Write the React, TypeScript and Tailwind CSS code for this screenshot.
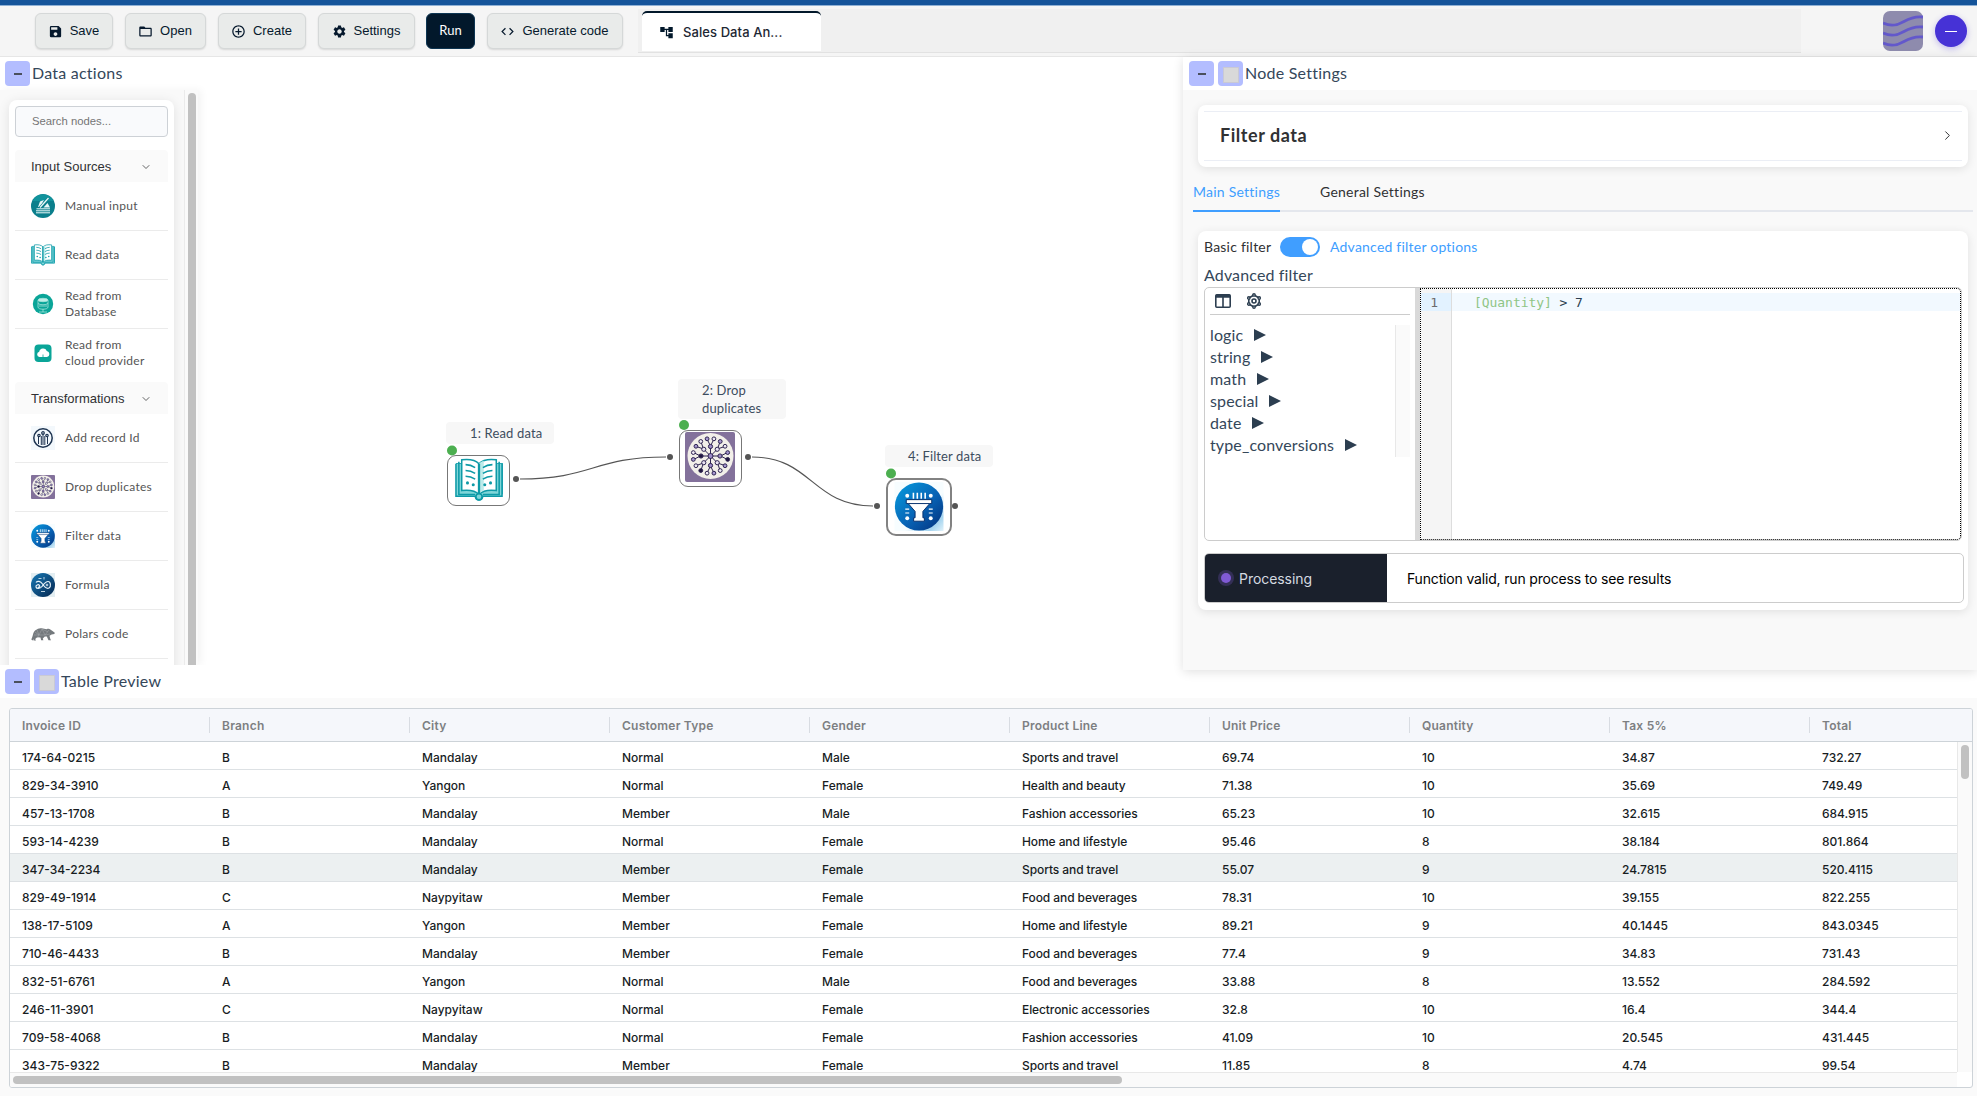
import React from "react";
import { MdSave, MdFolderOpen, MdAddCircleOutline, MdSettings, MdCode, MdAccountTree } from "react-icons/md";
import { ChevronDown, ChevronRight } from "lucide-react";

type IconProps = { className?: string };

const BookIcon = ({ className }: IconProps) => (
  <svg viewBox="0 0 50 50" className={className} fill="none" stroke="#0e9aa7" strokeWidth="1.6">
    <path d="M1 8h7v31c6 0 12 0 15 2h4c3-2 9-2 15-2h7V8h-7v29H8" fill="#4cc3c9" />
    <path d="M1 8v34h20c1 5 7 5 8 0h20V8" fill="#7fd6d9" />
    <path d="M4 6v34h17M46 6v34H29" />
    <path d="M7 4c8-1 14 0 18 4v32c-4-4-10-5-18-4z" fill="#fff" />
    <path d="M43 4c-8-1-14 0-18 4v32c4-4 10-5 18-4z" fill="#fff" />
    <path d="M25 8c2-2 3-2 5-3v31c-2 1-4 2-5 4z" fill="#bdebea" stroke="none" />
    <path d="M11 9c4 0 7 1 10 3M11 15c4 0 7 1 10 3M11 21c4 0 7 1 10 3M39 9c-4 0-7 1-10 3M39 15c-4 0-7 1-10 3M39 21c-4 0-7 1-10 3" />
    <path d="M25 8v33" strokeWidth="2.4" />
    <circle cx="13" cy="28" r="1.6" fill="#0e9aa7" stroke="none" />
    <circle cx="19" cy="30" r="1.6" fill="#0e9aa7" stroke="none" />
    <circle cx="31" cy="30" r="1.6" fill="#0e9aa7" stroke="none" />
    <circle cx="37" cy="28" r="1.6" fill="#0e9aa7" stroke="none" />
    <circle cx="25" cy="42.5" r="3.2" fill="#7fd6d9" />
  </svg>
);

const at = (deg: number, r: number) => [25.5 + r * Math.cos((deg * Math.PI) / 180), 24 + r * Math.sin((deg * Math.PI) / 180)];
const inner = [0, 45, 90, 135, 180, 225, 270, 315];
const outer = Array.from({ length: 16 }, (_, i) => i * 22.5 + 11.25);

const NetworkIcon = ({ className }: IconProps) => (
  <svg viewBox="0 0 50 50" className={className}>
    <rect width="50" height="50" rx="2" fill="#83719b" />
    <circle cx="25.5" cy="24" r="23" fill="#f2efe9" />
    <g stroke="#2d2350" strokeWidth="1">
      {inner.map((a) => {
        const [x, y] = at(a, 10);
        const [p, q] = at(a - 11.25, 17);
        const [s, t] = at(a + 11.25, 17);
        return <path key={a} d={`M25.500 24L${x} ${y}M${p} ${q}L${x} ${y}L${s} ${t}`} fill="none" />;
      })}
      {inner.map((a) => {
        const [x, y] = at(a, 9.5);
        return <circle key={a} cx={x} cy={y} r="2.1" fill={a === 180 ? "#1f1440" : a % 90 ? "#e8e2f2" : "#9c8ac6"} />;
      })}
      {outer.map((a, i) => {
        const [x, y] = at(a, 17.5);
        return <circle key={a} cx={x} cy={y} r="1.9" fill={i === 0 || i === 5 ? "#1f1440" : i % 2 ? "#a596cf" : "#efeaf5"} />;
      })}
      <circle cx="25.5" cy="24" r="2.5" fill="#9c8ac6" />
    </g>
  </svg>
);

const FunnelIcon = ({ className }: IconProps) => (
  <svg viewBox="0 0 50 50" className={className}>
    <defs>
      <linearGradient id="funnelSky" x1="0" y1="0" x2="1" y2="1">
        <stop offset="0" stopColor="#069ddf" />
        <stop offset="0.55" stopColor="#0863b5" />
        <stop offset="1" stopColor="#042f7a" />
      </linearGradient>
      <linearGradient id="funnelCorner" x1="0" y1="0" x2="1" y2="1">
        <stop offset="0.6" stopColor="#f7fdff" />
        <stop offset="0.85" stopColor="#a5d4ef" />
        <stop offset="1" stopColor="#e2f3fb" />
      </linearGradient>
    </defs>
    <rect width="50" height="50" fill="url(#funnelCorner)" />
    <circle cx="25" cy="25" r="24.6" fill="url(#funnelSky)" />
    <g fill="#fff">
      <circle cx="13" cy="14" r="2" />
      <circle cx="37" cy="14" r="2" />
      <circle cx="13" cy="37" r="2" />
      <circle cx="37" cy="37" r="2" />
      <path d="M18.500 11h1.600v6h-1.600zM22.500 11h1.600v6h-1.600zM26.500 11h1.600v6h-1.600zM30.500 11h1.600v6h-1.600z" />
      <path d="M11 27h4v1.200h-4zM11 31h4v1.200h-4zM35 27h4v1.200h-4zM35 31h4v1.200h-4z" />
      <path d="M12 18h26v4H36L29 30v6.500h1.500v3.500h-11v-3.500H21V30l-7-8h-2z" stroke="#06306e" strokeWidth="1" />
    </g>
    <path d="M14 22h22" stroke="#06306e" strokeWidth="1" />
  </svg>
);

const ManualIcon = ({ className }: IconProps) => (
  <svg viewBox="0 0 24 24" className={className}>
    <circle cx="12" cy="12" r="12" fill="#0b7f8c" />
    <path d="M1.500 7a11.500 11.500 0 0 1 21 0z" fill="#16a0a6" opacity="0.6" />
    <path d="M7 13l2-5.500 4-1.500-3.500 6.500z" fill="#e8f8f8" />
    <path d="M12.500 13.500l4-4.500 2.500 4.500z" fill="#e8f8f8" />
    <path d="M9 13.500l8.500-9.500" stroke="#0b7f8c" strokeWidth="2.600" />
    <path d="M9 13.500l8.500-9.500" stroke="#e8f8f8" strokeWidth="1.300" />
    <path d="M5.500 14.800h13.500M5 16.800h14M5 18.800h14" fill="none" stroke="#e8f8f8" strokeWidth="1" />
  </svg>
);

const DatabaseIcon = ({ className }: IconProps) => (
  <svg viewBox="0 0 24 24" className={className}>
    <circle cx="12" cy="12" r="10.200" fill="#0aa598" />
    <g fill="none" stroke="#a5e3db" strokeWidth="0.800">
      <ellipse cx="12" cy="8" rx="5" ry="1.700" fill="#bdeee7" />
      <path d="M7 8v7c0 1.400 2 2.200 5 2.200s5-.8 5-2.200V8M7 11.500c2 1.700 8 1.700 10 0M8 14h8M12 17v3M8 20h8" />
    </g>
  </svg>
);

const CloudIcon = ({ className }: IconProps) => (
  <svg viewBox="0 0 24 24" className={className}>
    <rect x="3.500" y="3.500" width="17" height="17.500" rx="4" fill="#0aa598" />
    <path d="M8.500 16a2.700 2.700 0 0 1-.3-5.300 4 4 0 0 1 7.600-.6A3 3 0 0 1 16 16z" fill="#fff" />
    <path d="M12 17v-3.500" stroke="#0aa598" strokeWidth="0.800" fill="none" />
  </svg>
);

const RecordIcon = ({ className }: IconProps) => (
  <svg viewBox="0 0 24 24" className={className}>
    <rect width="24" height="24" fill="#f3f8fc" />
    <g fill="none" stroke="#1d3350" strokeWidth="1.200">
      <circle cx="12" cy="12" r="9.200" strokeWidth="1.500" />
      <path d="M7.500 18v-7M10.300 19v-9M12 19V7.500M13.800 19v-9M16.500 18v-7" strokeWidth="1" />
      <circle cx="12" cy="7" r="1.300" />
      <circle cx="8" cy="9.500" r="1.200" />
      <circle cx="16" cy="9.500" r="1.200" />
    </g>
  </svg>
);

const FormulaIcon = ({ className }: IconProps) => (
  <svg viewBox="0 0 24 24" className={className}>
    <defs>
      <linearGradient id="formulaBlue" x1="0" y1="0" x2="1" y2="1">
        <stop offset="0" stopColor="#1778b4" />
        <stop offset="1" stopColor="#062750" />
      </linearGradient>
    </defs>
    <rect width="24" height="24" fill="#e3eef2" />
    <circle cx="12" cy="12" r="12" fill="url(#formulaBlue)" />
    <g fill="none" stroke="#e6f1f8" strokeWidth="1.200">
      <path d="M5 9.500c1.500-2 4.500-1.500 6.500 1.500s4 5.500 6.500 4 1.500-6.500-1-6.500-4 2.500-6 5-5.500 2.500-6 .5 2.500-3 3.500-1.500-.5 2-1.500 1.500" />
      <path d="M7.500 5.500h3M13 4v2.500M10 18.500h4" strokeWidth="0.800" />
      <circle cx="16" cy="12" r="0.900" strokeWidth="0.900" />
    </g>
  </svg>
);

const BearIcon = ({ className }: IconProps) => (
  <svg viewBox="0 0 24 24" className={className}>
    <path d="M.3 17.500c.8-1.700 1.300-3.200 1.700-5C3 8.500 6 6.800 9.500 6.300c2.500-.4 4 .7 6 1 1.500-.6 2.700-.7 3.800.2l2.200 1.500 2.300 1.700-.4 1.300-2.800.4-2.100 1.300.8 3.300.8 1.200h-2.600l-1.700-3.800-2 .2-2 1.900.6 1.700h-2.300l-.6-2.700-3.300-.2-2 1.800.8 1.300H2.500l.2-1.600-.9 1.700z" fill="#74797d" />
    <path d="M4 10l4 3 3-6 3 6 4-5M3 13l5 0 6 0 5-1M6 8l2 5-2 3M11 7l6 3" stroke="#a6abae" strokeWidth="0.500" fill="none" />
  </svg>
);

const HexIcon = ({ className }: IconProps) => (
  <svg viewBox="0 0 16 16" className={className} fill="none" stroke="#2c3e50" strokeWidth="1.600">
    <path d="M8 2l5.200 3v6L8 14l-5.200-3V5z" />
    <circle cx="8" cy="8" r="2" />
    {[[8, 1.9], [13.2, 5], [13.2, 11], [8, 14.100], [2.800, 11], [2.800, 5]].map(([x, y]) => (
      <circle key={`${x}-${y}`} cx={x} cy={y} r="1.200" fill="#fff" strokeWidth="1.400" />
    ))}
  </svg>
);

const ColumnsIcon = ({ className }: IconProps) => (
  <svg viewBox="0 0 16 14" className={className} fill="none" stroke="#2c3e50">
    <rect x="0.800" y="0.800" width="14.400" height="12.400" rx="1" strokeWidth="1.600" />
    <path d="M1 2.300h14" strokeWidth="3" />
    <path d="M8 2v11" strokeWidth="1.600" />
  </svg>
);

const WavesLogo = () => (
  <svg viewBox="0 0 40 40" className="h-10 w-10">
    <rect width="40" height="40" rx="7" fill="#8e8bad" />
    <g fill="none" stroke="#6358cb" strokeWidth="2.800">
      <path d="M0 12c9 4 15 2 21-1.500S32 5 40 6" />
      <path d="M0 22c9 4 15 2 21-1.500S32 15 40 16" />
      <path d="M0 32c9 4 15 2 21-1.500S32 25 40 26" />
    </g>
  </svg>
);

const toolbar = [
  { label: "Save", Icon: MdSave, box: "w-[78px]" },
  { label: "Open", Icon: MdFolderOpen, box: "w-[81px]" },
  { label: "Create", Icon: MdAddCircleOutline, box: "w-[88px]" },
  { label: "Settings", Icon: MdSettings, box: "w-[97px]" },
];

const ToolButton = ({ label, Icon, box }: { label: string; Icon: React.ComponentType<IconProps>; box: string }) => (
  <button className={`flex h-9 shrink-0 items-center justify-center gap-[7px] rounded-md border border-[#d5d8d8] bg-[#e9ebea] pr-px font-['Liberation_Sans',sans-serif] text-[13px] text-[#06192d] shadow-[0_1px_2px_rgba(0,0,0,0.12)] ${box}`}>
    <Icon className="h-[15px] w-[15px]" />
    {label}
  </button>
);

const PanelHeader = ({ title, square, pad = "pl-[5px]" }: { title: string; square?: boolean; pad?: string }) => (
  <div className={`flex h-[33px] shrink-0 items-center gap-1 bg-white ${pad}`}>
    <button className="flex h-[25px] w-[25px] items-center justify-center rounded bg-[#b3bdff]">
      <span className="mt-px h-[2px] w-2 bg-[#4a4f5c]" />
    </button>
    {square && (
      <button className="flex h-[25px] w-[25px] items-center justify-center rounded bg-[#b3bdff]">
        <span className="mt-[3px] h-4 w-4 border border-[#c9c9d5] bg-[#d9d9d9]" />
      </button>
    )}
    <span className="-ml-[2px] pb-[2px] text-[16px] tracking-[0.24px]">{title}</span>
  </div>
);

const groups = [
  {
    title: "Input Sources",
    items: [
      { label: "Manual input", Icon: ManualIcon },
      { label: "Read data", Icon: BookIcon },
      { label: "Read from\nDatabase", Icon: DatabaseIcon },
      { label: "Read from\ncloud provider", Icon: CloudIcon },
    ],
  },
  {
    title: "Transformations",
    items: [
      { label: "Add record Id", Icon: RecordIcon },
      { label: "Drop duplicates", Icon: NetworkIcon },
      { label: "Filter data", Icon: FunnelIcon },
      { label: "Formula", Icon: FormulaIcon },
      { label: "Polars code", Icon: BearIcon },
    ],
  },
];

const Sidebar = () => (
  <div className="flex h-[575px] w-[198px] shrink-0 overflow-hidden bg-[#f9f9f9] shadow-[3px_0_8px_rgba(0,0,0,0.05)]">
    <div className="h-full w-[184px] pl-[9px] pt-[10px]">
      <div className="h-[600px] w-[165px] rounded-lg bg-white px-1.5 pt-1.5 shadow-[0_2px_12px_rgba(0,0,0,0.1)]">
        <div className="flex h-[31px] items-center rounded border border-[#cdd1d6] bg-[#f9fafc] pl-4 font-['Liberation_Sans',sans-serif] text-[11.300px] text-[#757575]">Search nodes...</div>
        <div className="mt-[13px] flex flex-col gap-1">
          {groups.map((g, k) => (
            <div key={g.title}>
              <div className="flex h-8 items-center justify-between rounded-t bg-[#fafafa] pl-4 pr-4 pt-px font-['Liberation_Sans',sans-serif] text-[13px] text-[#303133]">
                {g.title}
                <ChevronDown className="h-3 w-3" strokeWidth={1.5} />
              </div>
              {g.items.map((it, i) => (
                <div key={it.label} className={`flex h-[49px] items-center gap-[10px] border-b pl-4 text-[12px] leading-[16.500px] tracking-[0.270px] text-[#555] ${k === 0 && i === 3 ? "border-transparent" : "border-[#ebebeb]"}`}>
                  <it.Icon className="h-6 w-6 shrink-0" />
                  <span className="whitespace-pre">{it.label}</span>
                </div>
              ))}
            </div>
          ))}
        </div>
      </div>
    </div>
    <div className="h-full w-[14px] border-l border-[#ebebeb] bg-[#fafafa] pl-[3px] pt-[3px]">
      <div className="h-[600px] w-2 rounded-full bg-[#c1c1c1]" />
    </div>
  </div>
);

const Canvas = () => (
  <div className="absolute left-0 top-[33px] h-[575px] w-[1183px]">
    <svg className="absolute left-0 top-0 h-[575px] w-[1183px]" fill="none">
      <g transform="translate(0 -90)">
        <path d="M520 479C593 479 593 457 666 457M752 457C812 457 812 506 873 506" stroke="#555" strokeWidth="1.200" />
        {[[516, 479], [670, 457], [748, 457], [877, 506], [955, 506]].map(([x, y]) => (
          <circle key={x} cx={x} cy={y} r="3" fill="#555" />
        ))}
        {[[452, 450.5], [684, 425], [891, 473.5]].map(([x, y]) => (
          <circle key={x} cx={x} cy={y} r="5" fill="#4caf50" />
        ))}
      </g>
    </svg>
    <div className="absolute left-[446px] top-[332px] flex h-[22px] w-[108px] items-center rounded bg-[#f7f7f7] pl-6 pt-px text-[13px] tracking-[0.150px] text-[#3d4d5e]">1: Read data</div>
    <div className="absolute left-[447px] top-[365px] flex h-[51px] w-[63px] rounded-[9px] border border-[#777] pl-1.5">
      <BookIcon className="h-[48px] w-[50px]" />
    </div>
    <div className="absolute left-[678px] top-[289px] flex h-[40px] w-[108px] items-center rounded bg-[#f7f7f7] pl-6 pr-2 text-[13px] leading-[18px] tracking-[0.150px] text-[#3d4d5e]">2: Drop duplicates</div>
    <div className="absolute left-[679px] top-[340px] flex h-[57px] w-[63px] rounded-[9px] border border-[#777] pl-[5px] pt-px">
      <NetworkIcon className="h-[50px] w-[50px]" />
    </div>
    <div className="absolute left-[885px] top-[355px] flex h-[22px] w-[108px] items-center rounded bg-[#f7f7f7] pl-[23px] pt-px text-[13px] tracking-[0.120px] text-[#3d4d5e]">4: Filter data</div>
    <div className="absolute left-[886px] top-[388px] flex h-[58px] w-[66px] justify-center rounded-[10px] border-2 border-[#828282] pt-0.5">
      <FunnelIcon className="h-[49px] w-[50px]" />
    </div>
  </div>
);

const functions = ["logic", "string", "math", "special", "date", "type_conversions"];

const NodeSettings = () => (
  <div className="relative z-10 flex h-[613px] w-[794px] shrink-0 flex-col bg-[#f9f9f9] shadow-[0_2px_10px_rgba(0,0,0,0.12)]">
    <PanelHeader title="Node Settings" square pad="pl-[6px]" />
    <div className="ml-[15px] mt-[15px] h-[62px] w-[770px] rounded-lg bg-white px-1.5 py-1.5 shadow-[0_2px_10px_rgba(0,0,0,0.1)]">
      <div className="flex h-[50px] items-center justify-between border-y border-[#ebeef5] pb-px pl-4 pr-[7px] text-[18px] font-bold tracking-[0.550px] text-[#303133]">
        Filter data
        <ChevronRight className="h-[15px] w-[15px]" strokeWidth={1.6} />
      </div>
    </div>
    <div className="ml-[10px] mt-[4px] flex h-[41px] w-[780px] gap-10 border-b-2 border-[#e4e7ed] text-[14px] tracking-[0.240px]">
      <div className="-mb-0.5 flex h-[41px] w-[87px] items-center border-b-2 border-[#409eff] pt-[2px] whitespace-nowrap text-[#409eff]">Main Settings</div>
      <div className="flex items-center pt-[2px] text-[#303133]">General Settings</div>
    </div>
    <div className="ml-[15px] mt-[19px] h-[379px] w-[770px] rounded-lg bg-white pl-1.5 pt-1.5 shadow-[0_2px_10px_rgba(0,0,0,0.1)]">
      <div className="flex h-5 items-center text-[14px] tracking-[0.220px] text-[#303133]">
        <span className="w-[76px] pb-[2px]">Basic filter</span>
        <span className="mr-[10px] flex h-5 w-10 items-center justify-end rounded-full bg-[#409eff] pr-0.5">
          <span className="h-4 w-4 rounded-full bg-white" />
        </span>
        <span className="pb-[2px] text-[#409eff]">Advanced filter options</span>
      </div>
      <div className="flex h-[30px] items-center pt-1.5 text-[16px] tracking-[0.140px]">Advanced filter</div>
      <div className="flex h-[254px] w-[758px] overflow-hidden rounded-[5px] border border-[#ccc]">
        <div className="flex w-[210px] flex-col pl-[5px] pr-[5px]">
          <div className="flex h-[27px] items-center gap-[15px] border-b border-[#ccc] pl-[5px]">
            <ColumnsIcon className="h-[14px] w-4" />
            <HexIcon className="h-4 w-4" />
          </div>
          <div className="mt-[10px] flex h-[132px] justify-between">
            <div>
              {functions.map((f) => (
                <div key={f} className="flex h-[22px] items-center gap-[11px] text-[16px] tracking-[0.130px]">
                  <span className="pb-[2px]">{f}</span>
                  <span className="-mt-[3px] h-0 w-0 border-y-[6.500px] border-l-[12px] border-y-transparent border-l-[#2c3e50]" />
                </div>
              ))}
            </div>
            <div className="w-[15px] border-l border-[#e8e8e8] bg-[#fafafa]" />
          </div>
        </div>
        <div className="w-[5px] bg-[#d9d9d9]" />
        <div className="flex flex-1 rounded-r border border-dotted border-black font-['DejaVu_Sans_Mono',monospace] text-[13px] leading-[18px] tracking-[-0.050px]">
          <div className="w-[31px] border-r border-[#ddd] bg-[#f5f5f5] pt-1">
            <div className="h-[18px] bg-[#e2f2ff] pr-[13px] pt-px text-right text-[#6c6c6c]">1</div>
          </div>
          <div className="flex-1 pt-1">
            <div className="h-[18px] whitespace-pre bg-[#f2f9ff] pl-[22px] pt-px text-[#2c3e50]">
              <span className="text-[#8fc586]">[Quantity]</span> &gt; 7
            </div>
          </div>
        </div>
      </div>
      <div className="mt-3 flex h-[50px] w-[760px] overflow-hidden rounded-[5px] border border-[#ccc] font-['Inter',sans-serif] text-[14px]">
        <div className="flex w-[182px] items-center gap-2 bg-[#1a202c] pl-4 tracking-[-0.050px] text-[#d5dae0]">
          <span className="h-[10px] w-[10px] rounded-full bg-[#805ad5] shadow-[0_0_0_3px_rgba(128,90,213,0.25)]" />
          Processing
        </div>
        <div className="flex items-center pl-5 tracking-[-0.170px] text-black">Function valid, run process to see results</div>
      </div>
    </div>
  </div>
);

const columns = ["Invoice ID", "Branch", "City", "Customer Type", "Gender", "Product Line", "Unit Price", "Quantity", "Tax 5%", "Total"];
const rows = [
  ["174-64-0215", "B", "Mandalay", "Normal", "Male", "Sports and travel", "69.74", "10", "34.87", "732.27"],
  ["829-34-3910", "A", "Yangon", "Normal", "Female", "Health and beauty", "71.38", "10", "35.69", "749.49"],
  ["457-13-1708", "B", "Mandalay", "Member", "Male", "Fashion accessories", "65.23", "10", "32.615", "684.915"],
  ["593-14-4239", "B", "Mandalay", "Normal", "Female", "Home and lifestyle", "95.46", "8", "38.184", "801.864"],
  ["347-34-2234", "B", "Mandalay", "Member", "Female", "Sports and travel", "55.07", "9", "24.7815", "520.4115"],
  ["829-49-1914", "C", "Naypyitaw", "Member", "Female", "Food and beverages", "78.31", "10", "39.155", "822.255"],
  ["138-17-5109", "A", "Yangon", "Member", "Female", "Home and lifestyle", "89.21", "9", "40.1445", "843.0345"],
  ["710-46-4433", "B", "Mandalay", "Member", "Female", "Food and beverages", "77.4", "9", "34.83", "731.43"],
  ["832-51-6761", "A", "Yangon", "Normal", "Male", "Food and beverages", "33.88", "8", "13.552", "284.592"],
  ["246-11-3901", "C", "Naypyitaw", "Normal", "Female", "Electronic accessories", "32.8", "10", "16.4", "344.4"],
  ["709-58-4068", "B", "Mandalay", "Normal", "Female", "Fashion accessories", "41.09", "10", "20.545", "431.445"],
  ["343-75-9322", "B", "Mandalay", "Member", "Female", "Sports and travel", "11.85", "8", "4.74", "99.54"],
];

const Table = () => (
  <div className="ml-[9px] mt-[10px] flex h-[380px] w-[1964px] flex-col overflow-hidden rounded-[3px] border border-[#cdd3d8] bg-white font-['Inter',sans-serif] text-[12px]">
    <div className="flex h-[33px] shrink-0 items-center border-b border-[#cdd3d8] bg-[#f5f7fb] font-semibold tracking-[0.220px] text-[#7d7f82]">
      {columns.map((c, i) => (
        <div key={c} className={`flex h-4 w-[200px] shrink-0 items-center pl-3 pt-[2px] ${i < 9 ? "border-r border-[#d8dce2]" : ""}`}>{c}</div>
      ))}
    </div>
    <div className="flex min-h-0 flex-1">
      <div className="w-[1947px] overflow-hidden">
        {rows.map((r, n) => (
          <div key={r[0]} className={`flex h-7 items-center border-b border-[#dde1e4] text-[#181d1f] ${n === 4 ? "bg-[#ecf0f1]" : ""}`}>
            {r.map((v, i) => (
              <div key={i} className={`w-[200px] shrink-0 pl-3 pt-1 font-medium ${i === 5 ? "tracking-[-0.090px]" : ""}`}>{v}</div>
            ))}
          </div>
        ))}
      </div>
      <div className="w-[15px] border-l border-[#e8e8e8] bg-[#fafafa] pl-[3px] pt-[3px]">
        <div className="h-[34px] w-2 rounded-full bg-[#c1c1c1]" />
      </div>
    </div>
    <div className="flex h-[15px] w-[1947px] shrink-0 items-start border-t border-[#e8e8e8] bg-[#fafafa] pl-[3px] pt-[3px]">
      <div className="h-2 w-[1109px] rounded-full bg-[#c1c1c1]" />
    </div>
  </div>
);

export default function App() {
  return (
    <div className="flex h-[1096px] w-[1977px] flex-col overflow-hidden bg-white font-['Lato',sans-serif] text-[#34475a]">
      <div className="h-1.5 shrink-0 border-b border-[#8fb0d4] bg-[#15549a]" />
      <header className="flex h-[51px] shrink-0 items-center border-b border-[#e6e6e6] bg-[#f5f5f5] pl-[35px]">
        <div className="flex gap-3">
          {toolbar.map((b) => (
            <ToolButton key={b.label} {...b} />
          ))}
          <button className="-ml-px flex h-9 w-[49px] items-center justify-center rounded-md border border-[#0d3552] bg-[#02182b] text-[13px] text-white">Run</button>
          <ToolButton label="Generate code" Icon={MdCode} box="w-[136px]" />
        </div>
        <div className="ml-[15px] flex h-[44px] w-[1163px] items-end border-b border-[#e2e2e2] bg-[#f0f0f0] pb-px pl-1">
          <div className="flex h-10 w-[179px] items-center gap-[9px] rounded-t-[5px] border-t-2 border-[#02182b] bg-white pl-[17px] font-['Inter',sans-serif] text-[13px] font-medium tracking-[0.080px] text-[#1d2733]">
            <MdAccountTree className="h-[15px] w-[15px] text-[#02182b]" />
            <span className="pt-[2px]">Sales Data An...</span>
          </div>
        </div>
        <div className="ml-[82px] flex items-center gap-3">
          <WavesLogo />
          <div className="flex h-8 w-8 items-center justify-center rounded-full bg-[#4632d6] shadow-[0_2px_6px_rgba(70,50,214,0.300)]">
            <span className="h-px w-3 bg-white" />
          </div>
        </div>
      </header>
      <main className="relative flex h-[608px] shrink-0">
        <Canvas />
        <div className="relative flex h-[608px] w-[1183px] shrink-0 flex-col">
          <PanelHeader title="Data actions" />
          <Sidebar />
        </div>
        <NodeSettings />
      </main>
      <section className="relative flex flex-1 flex-col bg-[#fafafa]">
        <PanelHeader title="Table Preview" square />
        <Table />
      </section>
    </div>
  );
}
